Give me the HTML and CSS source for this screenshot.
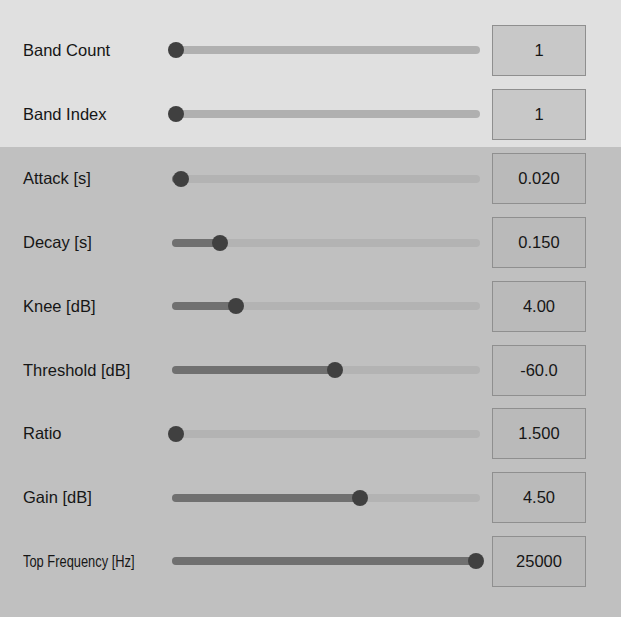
FILE: index.html
```html
<!DOCTYPE html>
<html>
<head>
<meta charset="utf-8">
<link rel="stylesheet" href="styles.css">
</head>
<body>
<div class="panel">
  <div class="section section-top">
    <div class="row">
      <div class="label">Band Count</div>
      <div class="slider"><div class="fill" style="--f:0"></div><div class="thumb" style="--f:0"></div></div>
      <div class="value">1</div>
    </div>
    <div class="row">
      <div class="label">Band Index</div>
      <div class="slider"><div class="fill" style="--f:0"></div><div class="thumb" style="--f:0"></div></div>
      <div class="value">1</div>
    </div>
  </div>
  <div class="section section-bottom">
    <div class="row">
      <div class="label">Attack [s]</div>
      <div class="slider"><div class="fill" style="--f:0.018"></div><div class="thumb" style="--f:0.018"></div></div>
      <div class="value">0.020</div>
    </div>
    <div class="row">
      <div class="label">Decay [s]</div>
      <div class="slider"><div class="fill" style="--f:0.148"></div><div class="thumb" style="--f:0.148"></div></div>
      <div class="value">0.150</div>
    </div>
    <div class="row">
      <div class="label">Knee [dB]</div>
      <div class="slider"><div class="fill" style="--f:0.2"></div><div class="thumb" style="--f:0.2"></div></div>
      <div class="value">4.00</div>
    </div>
    <div class="row">
      <div class="label">Threshold [dB]</div>
      <div class="slider"><div class="fill" style="--f:0.53"></div><div class="thumb" style="--f:0.53"></div></div>
      <div class="value">-60.0</div>
    </div>
    <div class="row">
      <div class="label">Ratio</div>
      <div class="slider"><div class="fill" style="--f:0"></div><div class="thumb" style="--f:0"></div></div>
      <div class="value">1.500</div>
    </div>
    <div class="row">
      <div class="label">Gain [dB]</div>
      <div class="slider"><div class="fill" style="--f:0.613"></div><div class="thumb" style="--f:0.613"></div></div>
      <div class="value">4.50</div>
    </div>
    <div class="row">
      <div class="label"><span class="narrow">Top Frequency [Hz]</span></div>
      <div class="slider"><div class="fill" style="--f:1"></div><div class="thumb" style="--f:1"></div></div>
      <div class="value">25000</div>
    </div>
  </div>
</div>
</body>
</html>
```

FILE: styles.css
```css
html, body {
  margin: 0;
  padding: 0;
}
body {
  width: 621px;
  height: 617px;
  background: #c0c0c0;
  font-family: "Liberation Sans", Arial, sans-serif;
  font-size: 16.5px;
  color: #161616;
  overflow: hidden;
}
.panel {
  display: flex;
  flex-direction: column;
  height: 617px;
}
.section-top {
  background: #e0e0e0;
  padding-top: 18.5px;
  padding-bottom: 1px;
}
.section-bottom {
  background: #c0c0c0;
  flex: 1;
}
.row {
  display: flex;
  align-items: center;
  height: 63.75px;
  padding-left: 23px;
}
.label {
  width: 149px;
  flex: none;
  white-space: nowrap;
}
.narrow {
  display: inline-block;
  transform: scaleX(0.78);
  transform-origin: left center;
}
.slider {
  position: relative;
  width: 308px;
  height: 8px;
  border-radius: 4px;
  flex: none;
}
.section-top .slider {
  background: #b0b0b0;
}
.section-bottom .slider {
  background: #b3b3b3;
}
.fill {
  height: 8px;
  border-radius: 4px;
  background: #707070;
  width: calc(4px + 300px * var(--f));
}
.section-top .fill {
  background: transparent;
}
.thumb {
  position: absolute;
  top: -4px;
  left: calc(300px * var(--f) - 4px);
  width: 16px;
  height: 16px;
  border-radius: 50%;
  background: #404040;
}
.value {
  margin-left: 12px;
  width: 94px;
  height: 51px;
  box-sizing: border-box;
  border: 1px solid #8f8f8f;
  display: flex;
  align-items: center;
  justify-content: center;
  flex: none;
}
.section-top .value {
  background: #c8c8c8;
}
.section-bottom .value {
  background: #bababa;
}
```
